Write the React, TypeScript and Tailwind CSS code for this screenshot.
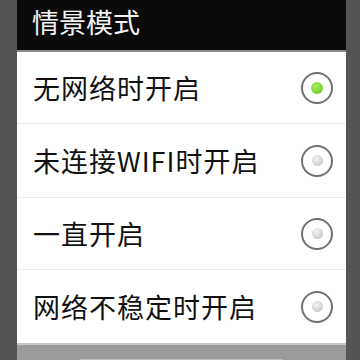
const options = ['无网络时开启', '未连接WIFI时开启', '一直开启', '网络不稳定时开启']

function Radio({ checked }: { checked: boolean }) {
  return (
    <div className="w-[32px] h-[32px] rounded-full border-2 border-[#707070] flex items-center justify-center bg-white">
      {checked ? (
        <div className="w-[12px] h-[12px] rounded-full bg-[radial-gradient(circle_at_40%_35%,#a8f060,#5cc51a)]" />
      ) : (
        <div className="w-[11px] h-[11px] rounded-full bg-[radial-gradient(circle_at_40%_35%,#f4f4f4,#bdbdbd)]" />
      )}
    </div>
  )
}

export default function App() {
  return (
    <div
      className="w-[360px] h-[360px] overflow-hidden flex bg-[#555]"
      style={{ fontFamily: '"Noto Sans CJK SC", "Noto Sans", sans-serif' }}
    >
      <div className="w-[17px] bg-[#555] shrink-0" />
      <div className="flex-1 flex flex-col">
        <div className="h-[50px] bg-[#0b0b0b] flex items-start pt-[8px] pl-[15px] shrink-0">
          <span className="text-[#f2f2f2] text-[27px] leading-none">情景模式</span>
        </div>
        <div className="h-[2px] bg-[#8a8a8a] shrink-0" />
        <div className="bg-white flex flex-col">
          {options.map((opt, i) => (
            <div
              key={opt}
              className={`flex items-center justify-between pl-[16px] pr-[13px] ${i === 1 ? 'h-[74px]' : i === 3 ? 'h-[73px]' : 'h-[72px]'} ${i < options.length - 1 ? 'border-b border-[#ececec]' : ''}`}
            >
              <span className="text-[#111] text-[27px] leading-none tracking-[1px]">{opt}</span>
              <Radio checked={i === 0} />
            </div>
          ))}
        </div>
        <div className="h-[2px] bg-[#c8c8c8] shrink-0" />
        <div className="flex-1 bg-[#9b9b9b] flex justify-center pt-[14px]">
          <div className="w-[205px] h-[20px] bg-[#e4e4e4] border border-[#bdbdbd] rounded-t-[2px]" />
        </div>
      </div>
      <div className="w-[14px] bg-[#555] shrink-0" />
    </div>
  )
}
